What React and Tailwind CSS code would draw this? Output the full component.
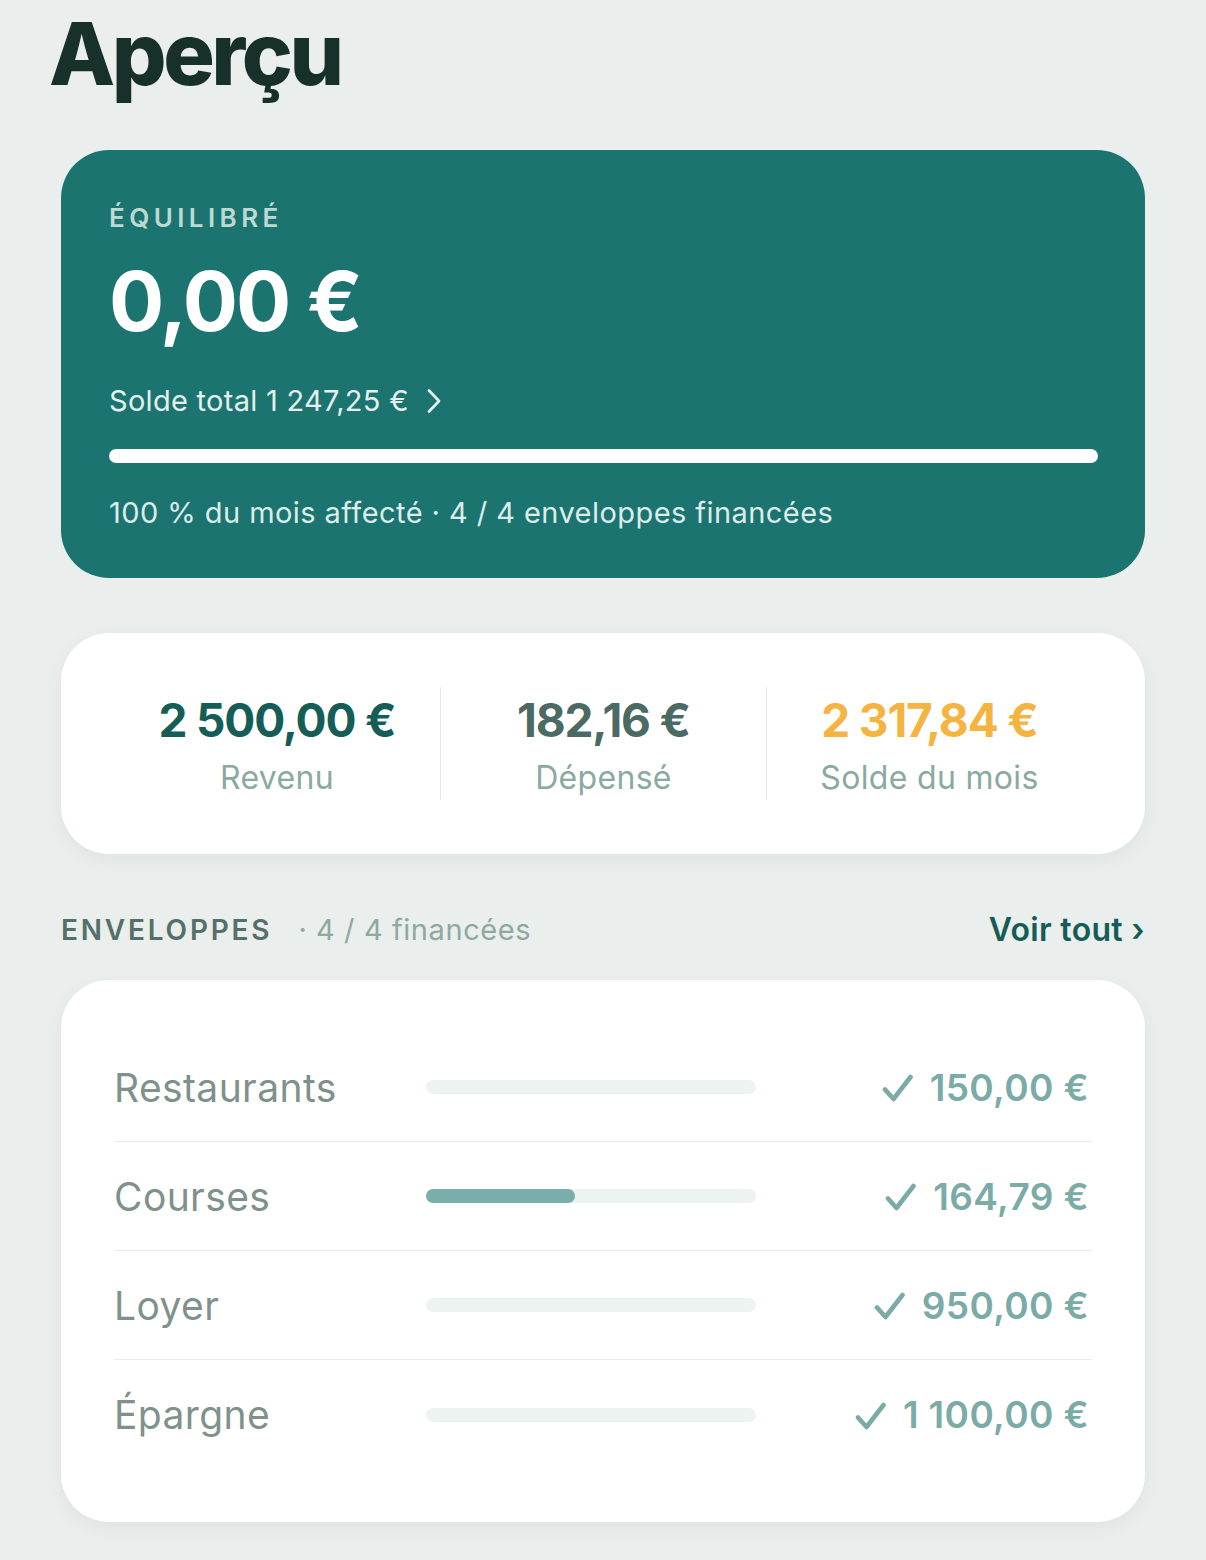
import React from 'react';

const envelopes = [
  { name: 'Restaurants', pct: 0, amount: '150,00 €' },
  { name: 'Courses', pct: 45, amount: '164,79 €' },
  { name: 'Loyer', pct: 0, amount: '950,00 €' },
  { name: 'Épargne', pct: 0, amount: '1 100,00 €' },
];

function Chevron() {
  return (
    <svg width="16" height="26" viewBox="0 0 16 26" fill="none" className="ml-[17px]">
      <path d="M3 2.5 L13 13 L3 23.5" stroke="#e3f0ee" strokeWidth="2.8" strokeLinecap="round" strokeLinejoin="round" />
    </svg>
  );
}

function Check() {
  return (
    <svg width="31" height="28" viewBox="0 0 31 28" fill="none" className="mr-[17px] mt-[2px]">
      <path d="M3 15.5 L11.5 25 L28.5 3" stroke="#7aaba6" strokeWidth="4.6" strokeLinecap="round" strokeLinejoin="round" />
    </svg>
  );
}

export default function App() {
  return (
    <main className="min-h-[1560px] bg-[#eaeeed] font-['Inter',sans-serif] pb-[39px]">
      {/* Title */}
      <h1 className="pl-[49px] pt-[11px] text-[86px] leading-none font-extrabold tracking-[-0.04em] text-[#173029]">
        Aperçu
      </h1>

      <div className="px-[61px]">
        {/* Hero */}
        <section className="mt-[53px] rounded-[48px] bg-[#1c7470] pl-[48px] pr-[47px] pt-[53px] pb-[47px]">
          <p className="text-[26px] leading-[30px] font-semibold tracking-[0.17em] text-[#bcd9d4]">ÉQUILIBRÉ</p>
          <p className="mt-[28px] text-[82px] leading-none font-bold tracking-[-0.025em] text-white">0,00 €</p>
          <div className="mt-[40px] flex items-center text-[29px] leading-[36px] tracking-[0.01em] text-[#e3f0ee]">
            Solde total 1 247,25 €
            <Chevron />
          </div>
          <div className="mt-[30px] h-[14px] w-full rounded-full bg-white" />
          <p className="mt-[32px] text-[29px] leading-[36px] tracking-[0.015em] text-[#dcecea]">
            100 % du mois affecté · 4 / 4 enveloppes financées
          </p>
        </section>

        {/* Stats */}
        <section className="mt-[55px] h-[221px] rounded-[48px] bg-white px-[53px] flex items-center shadow-[0_6px_20px_rgba(20,50,45,0.05)]">
          <div className="grid w-full grid-cols-3">
            {[
              { v: '2 500,00 €', l: 'Revenu', c: 'text-[#145e57]' },
              { v: '182,16 €', l: 'Dépensé', c: 'text-[#4b6a63]' },
              { v: '2 317,84 €', l: 'Solde du mois', c: 'text-[#f4b43f]' },
            ].map((s, i) => (
              <div
                key={i}
                className={
                  'flex h-[113px] flex-col items-center justify-center ' +
                  (i > 0 ? 'border-l border-[#e4eae8]' : '')
                }
              >
                <span className={'mt-[4px] text-[46px] leading-[52px] font-bold tracking-[-0.025em] ' + s.c}>{s.v}</span>
                <span className="mt-[13px] text-[32px] leading-[38px] tracking-[0.01em] text-[#8aa9a1]">{s.l}</span>
              </div>
            ))}
          </div>
        </section>

        {/* Section header */}
        <div className="mt-[58px] flex items-center justify-between">
          <div className="flex items-center text-[28px] leading-[36px]">
            <span className="font-semibold tracking-[0.1em] text-[#557069]">ENVELOPPES</span>
            <span className="ml-[26px] text-[29px] tracking-[0.02em] text-[#8fa9a1]">· 4 / 4 financées</span>
          </div>
          <a className="text-[32px] leading-[36px] font-semibold tracking-[0.01em] text-[#145c55]">Voir tout ›</a>
        </div>

        {/* Envelopes */}
        <section className="mt-[32px] rounded-[48px] bg-white px-[53px] pt-[53px] pb-[53px] shadow-[0_6px_20px_rgba(20,50,45,0.05)]">
          {envelopes.map((e, i) => (
            <div
              key={e.name}
              className={
                'flex h-[109px] items-center ' + (i < envelopes.length - 1 ? 'border-b border-[#e6ecea]' : '')
              }
            >
              <span className="w-[312px] text-[39px] leading-none tracking-[0.01em] text-[#7f918b]">{e.name}</span>
              <div className="h-[14px] w-[330px] rounded-full bg-[#ecf3f1]">
                {e.pct > 0 && (
                  <div className="h-full rounded-full bg-[#7aaeaa]" style={{ width: e.pct + '%' }} />
                )}
              </div>
              <span className="ml-auto flex items-center pr-[3px] text-[37px] leading-none font-semibold tracking-[0.01em] text-[#7aaba6]">
                <Check />
                {e.amount}
              </span>
            </div>
          ))}
        </section>
      </div>
    </main>
  );
}
